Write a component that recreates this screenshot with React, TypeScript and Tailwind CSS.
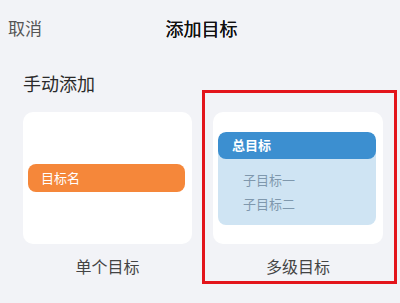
export default function App() {
  return (
    <div
      className="relative w-[400px] h-[303px] overflow-hidden bg-[#f2f3f7]"
      style={{ fontFamily: '"Noto Sans CJK SC", "Noto Sans", sans-serif' }}
    >
      {/* header */}
      <div className="grid grid-cols-3 items-center h-[56px]">
        <span className="pl-[8px] text-[17px] text-[#555]">取消</span>
        <span className="text-center text-[18px] text-[#111] pl-[3px] [text-shadow:0_0_0.4px_#111]">添加目标</span>
        <span />
      </div>

      <div className="pl-[23px] mt-[17px] text-[18px] leading-[20px] text-[#2a2a2a]">手动添加</div>

      <div className="flex gap-[21px] pl-[23px] mt-[19px]">
        {/* single */}
        <div className="flex flex-col items-center">
          <div className="w-[169px] h-[132px] rounded-[10px] bg-white flex items-center pl-[5px] pr-[7px]">
            <div className="w-full h-[28px] rounded-[8px] bg-[#f5873a] flex items-center pl-[13px] text-[13px] text-white">
              目标名
            </div>
          </div>
          <div className="mt-[10px] text-[16px] text-[#444]">单个目标</div>
        </div>

        {/* multi */}
        <div className="flex flex-col items-center">
          <div className="w-[170px] h-[132px] rounded-[10px] bg-white flex flex-col justify-center pl-[5px] pr-[7px]">
            <div className="h-[93px] rounded-[8px] bg-[#cfe4f3] overflow-hidden">
              <div className="h-[27px] rounded-[8px] bg-[#3c8fd0] flex items-center pl-[14px] text-[13px] font-bold text-white">
                总目标
              </div>
              <div className="pl-[25px] mt-[12px] text-[13px] leading-[18px] text-[#7f98ad]">子目标一</div>
              <div className="pl-[25px] mt-[6px] text-[13px] leading-[18px] text-[#7f98ad]">子目标二</div>
            </div>
          </div>
          <div className="mt-[10px] text-[16px] text-[#444]">多级目标</div>
        </div>
      </div>

      {/* highlight annotation */}
      <div className="absolute left-[202px] top-[90px] w-[195px] h-[194px] border-[3px] border-[#e3141b]" />
    </div>
  )
}
